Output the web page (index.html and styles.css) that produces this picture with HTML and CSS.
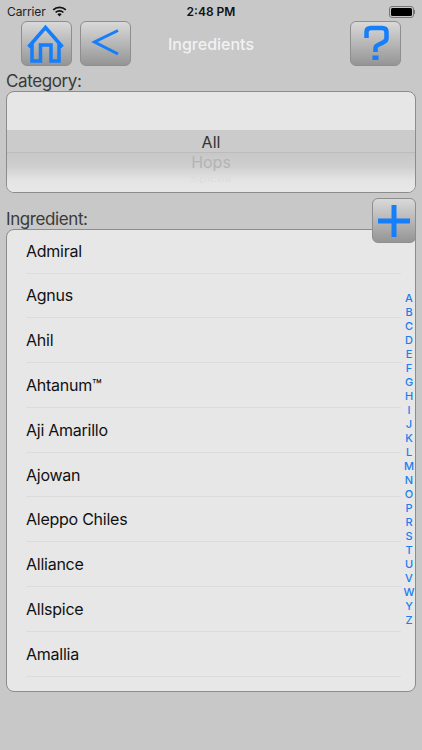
FILE: index.html
```html
<!DOCTYPE html>
<html lang="en">
<head>
<meta charset="utf-8">
<title>Ingredients</title>
<link rel="stylesheet" href="styles.css">
</head>
<body>
<div class="screen">
  <div class="status">
    <div class="status-left">
      <span>Carrier</span>
      <svg class="wifi" width="15" height="11" viewBox="0 0 15 11"><path d="M7.500 10.600 5.400 8.300a3 3 0 0 1 4.200 0Z" fill="#111"/><path d="M3.600 6.500a5.600 5.600 0 0 1 7.800 0M1.200 3.900a9 9 0 0 1 12.600 0" fill="none" stroke="#111" stroke-width="1.700"/></svg>
    </div>
    <div class="status-time">2:48 PM</div>
    <div class="battery"><span class="battery-body"><span class="battery-fill"></span></span><span class="battery-tip"></span></div>
  </div>
  <div class="toolbar">
    <div class="tool-group">
      <div class="btn"><svg width="40" height="40" viewBox="0 0 40 40"><path d="M1.500 23 18.500 3.500 35.500 23M5 19V37H13.500V21H24V37H32V19" fill="none" stroke="#147efb" stroke-width="3.500"/></svg></div>
      <div class="btn"><svg width="30" height="30" viewBox="0 0 30 30"><path d="M27 1.500 3.500 13 27 25" fill="none" stroke="#147efb" stroke-width="3"/></svg></div>
    </div>
    <div class="title">Ingredients</div>
    <div class="tool-group tool-group-end">
      <div class="btn"><svg width="30" height="40" viewBox="0 0 30 40"><path d="M5.500 14V8Q5.500 4 10 4H21Q25.500 4 25.500 8V14Q25.500 17 22 18.500L17 21Q14.500 22 14.500 24V28" fill="none" stroke="#147efb" stroke-width="4.500"/><rect x="11.500" y="31.500" width="6" height="4.500" fill="#147efb"/></svg></div>
    </div>
  </div>
  <div class="label label-category">Category:</div>
  <div class="picker">
    <div class="picker-top"></div>
    <div class="picker-sel">All</div>
    <div class="picker-rest">
      <div class="picker-hops">Hops</div>
      <div class="picker-spices">Spices</div>
    </div>
  </div>
  <div class="ingredient-head">
    <div class="label">Ingredient:</div>
    <div class="btn btn-add"><svg width="34" height="34" viewBox="0 0 34 34"><path d="M17 1v32M1 17h32" fill="none" stroke="#147efb" stroke-width="5"/></svg></div>
  </div>
  <div class="list">
    <div class="row">Admiral</div>
    <div class="row">Agnus</div>
    <div class="row">Ahil</div>
    <div class="row">Ahtanum™</div>
    <div class="row">Aji Amarillo</div>
    <div class="row">Ajowan</div>
    <div class="row">Aleppo Chiles</div>
    <div class="row">Alliance</div>
    <div class="row">Allspice</div>
    <div class="row">Amallia</div>
    <div class="index">
      <span>A</span><span>B</span><span>C</span><span>D</span><span>E</span><span>F</span><span>G</span><span>H</span><span>I</span><span>J</span><span>K</span><span>L</span><span>M</span><span>N</span><span>O</span><span>P</span><span>R</span><span>S</span><span>T</span><span>U</span><span>V</span><span>W</span><span>Y</span><span>Z</span>
    </div>
  </div>
</div>
</body>
</html>
```
FILE: styles.css
```css
* { box-sizing: border-box; }
html, body { margin: 0; padding: 0; }
body { font-family: Inter, "Liberation Sans", sans-serif; background: #c8c8c8; color: #111; }
.screen { width: 422px; height: 750px; overflow: hidden; padding-top: 3px; }
.status { display: flex; align-items: center; height: 17px; padding: 0 4px 0 7px; font-size: 12px; position: relative; }
.status-left { display: flex; align-items: center; gap: 6px; flex: 1; color: #222; letter-spacing: -0.1px; }
.status-time { position: absolute; left: 0; right: 0; text-align: center; font-weight: 600; color: #111; font-size: 12px; }
.battery { display: flex; align-items: center; margin-right: 3px; }
.battery-body { display: block; width: 25px; height: 12px; border: 1px solid #777; border-radius: 3px; padding: 1px; }
.battery-fill { display: block; width: 100%; height: 100%; background: #000; border-radius: 1.500px; }
.battery-tip { display: block; width: 1.500px; height: 4px; background: #777; }
.toolbar { display: grid; grid-template-columns: 1fr auto 1fr; align-items: center; padding: 1px 21px 0; height: 46px; }
.tool-group { display: flex; gap: 8px; }
.tool-group-end { justify-content: flex-end; }
.btn { width: 51px; height: 45px; flex: none; display: flex; align-items: center; justify-content: center; border: 1px solid #8e8e8e; border-radius: 6px; background: linear-gradient(#d9d9d9, #959595); }
.title { text-align: center; color: #f2f2f2; font-size: 16px; font-weight: 500; }
.label { font-size: 17px; letter-spacing: -0.4px; line-height: 22px; color: #3a3a3a; padding-left: 6px; }
.label-category { margin-top: 4px; }
.picker { margin: -1px 6px 0; height: 102px; border: 1px solid #8c8c8c; border-radius: 8px; background: #e6e6e6; overflow: hidden; display: flex; flex-direction: column; }
.picker-top { height: 38px; flex: none; }
.picker-sel { height: 23px; flex: none; background: #cbcbcb; border-bottom: 1px solid #bcbcbc; text-align: center; font-size: 16px; line-height: 24px; color: #333; }
.picker-rest { flex: 1; overflow: hidden; text-align: center; background: linear-gradient(#c8c8c8 0%, #cfcfcf 35%, #e4e4e4 70%, #e8e8e8 100%); }
.picker-hops { font-size: 16px; line-height: 18px; color: #b4b4b4; }
.picker-spices { font-size: 13px; line-height: 10px; margin-top: 3px; color: #dcdcdc; transform: scaleY(0.6); }
.ingredient-head { position: relative; margin-top: 15px; height: 21px; }
.btn-add { position: absolute; right: 6px; top: -10px; width: 44px; z-index: 2; }
.list { position: relative; margin: 0 6px; height: 463px; border: 1px solid #8c8c8c; border-radius: 8px; background: #e7e7e7; overflow: hidden; }
.row { height: 44.800px; margin: 0 14px 0 19px; display: flex; align-items: center; font-size: 16px; letter-spacing: -0.25px; color: #111; border-bottom: 1px solid #dcdcdc; }
.row:first-child { height: 43.500px; }
.index { position: absolute; top: 61px; right: 0; width: 12px; display: flex; flex-direction: column; align-items: center; color: #1c7ded; font-size: 11px; font-weight: 500; }
.index span { display: block; height: 14px; line-height: 14px; }
```
